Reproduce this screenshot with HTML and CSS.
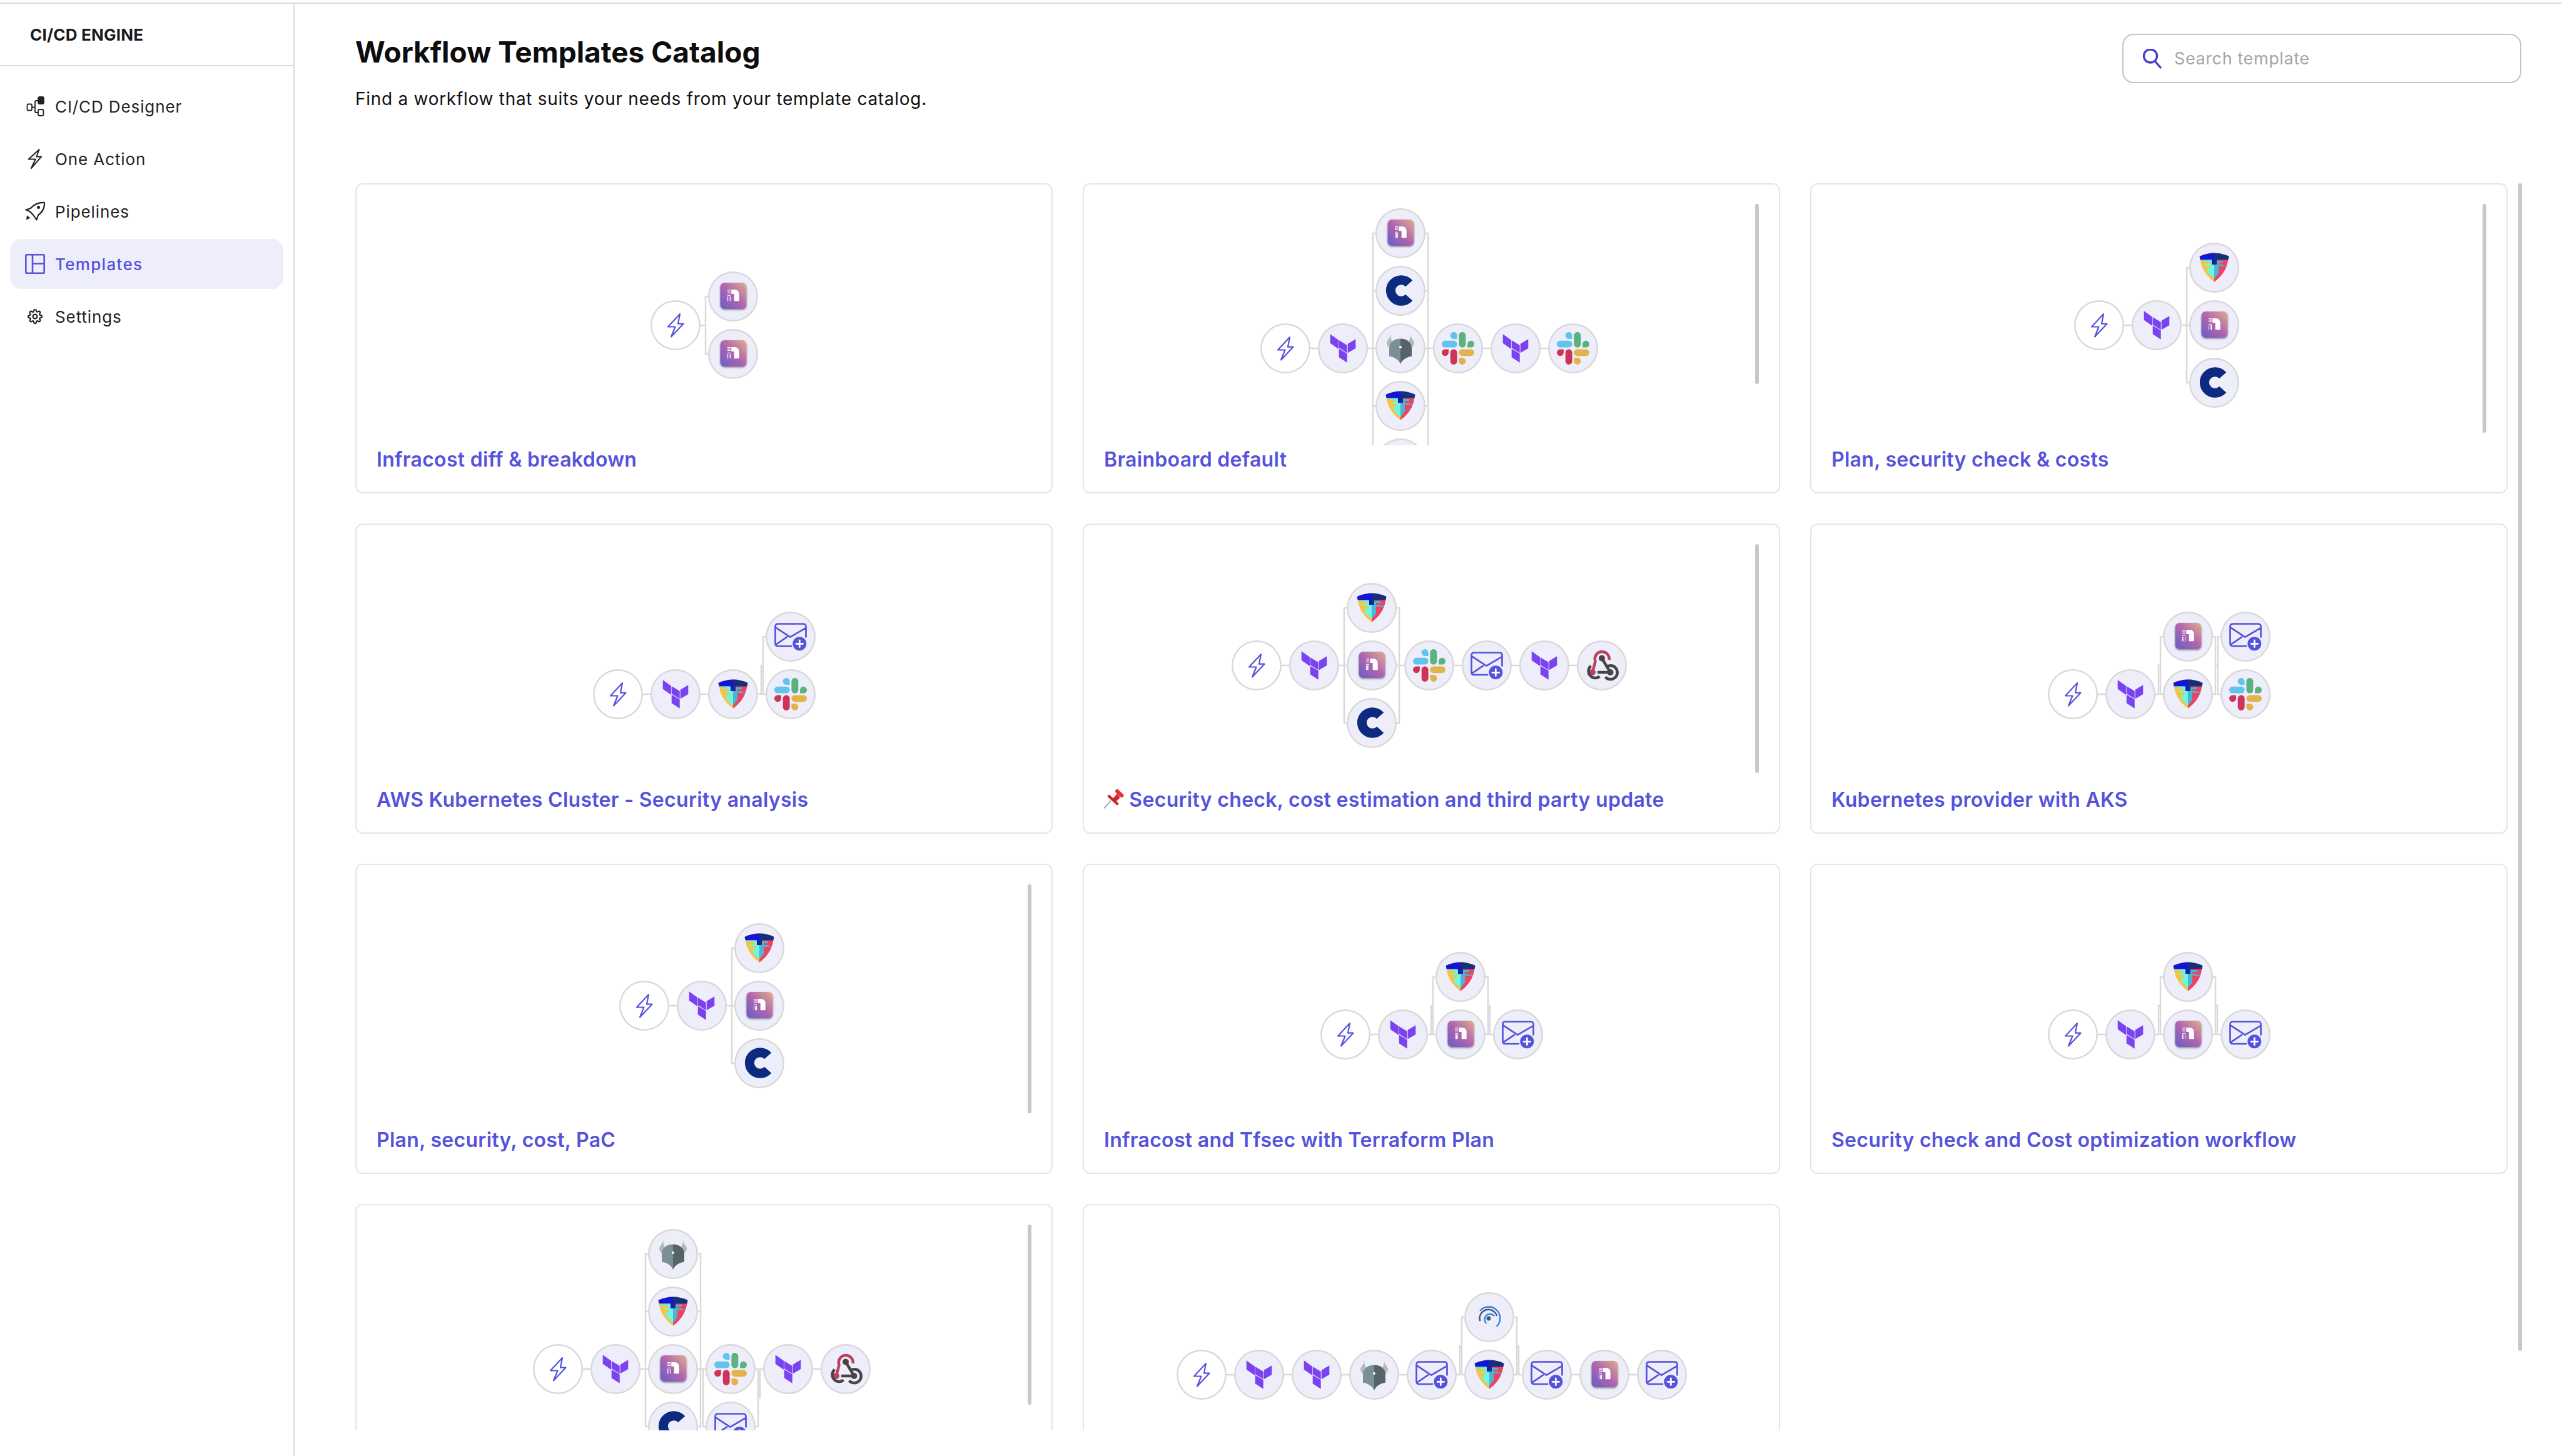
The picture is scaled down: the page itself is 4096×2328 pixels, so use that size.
FILE: index.html
```html
<!DOCTYPE html>
<html lang="en">
<head>
<meta charset="utf-8">
<title>Workflow Templates Catalog</title>
<link rel="stylesheet" href="styles.css">
</head>
<body>
<svg class="sprite" width="0" height="0" aria-hidden="true">
  <defs>
    <linearGradient id="netgrad" x1="0" y1="1" x2="1" y2="0">
      <stop offset="0" stop-color="#655fc4"/>
      <stop offset=".5" stop-color="#b064b0"/>
      <stop offset="1" stop-color="#e0ae8c"/>
    </linearGradient>
    <filter id="netshadow" x="-20%" y="-20%" width="140%" height="150%">
      <feDropShadow dx="0" dy="1.5" stdDeviation="1.6" flood-color="#000" flood-opacity=".45"/>
    </filter>
    <clipPath id="shieldclip"><path d="M16.5 22Q28 16.5 40 16.5T63.5 22L60.5 36Q55 52 40 62.7 25 52 19.5 36Z"/></clipPath>
  </defs>
  <symbol id="bolt" viewBox="0 0 80 80"><path d="M47 22 28 42.5H39.5L33 58.5 52.5 37.7H44Z" fill="none" stroke="#5552dc" stroke-width="2.2" stroke-linejoin="round"/></symbol>
  <symbol id="tf" viewBox="0 0 80 80"><path fill="#7b42ef" d="M19.7 17.3 33 26.7V41L19.7 31.7ZM33.7 27 46.7 35V47.3L33.7 39.3ZM47.7 32.7 60.3 25.3V40L47.7 47.3ZM33.7 40.7 46.7 48.3V62.7L33.7 54.3Z"/></symbol>
  <symbol id="net" viewBox="0 0 80 80">
    <rect x="19.5" y="18" width="42" height="42" rx="7" fill="url(#netgrad)" filter="url(#netshadow)"/>
    <path fill="#fff" d="M37.3 29H43Q49.7 29.5 49.7 37V47.3H41.7V36H37.3Z"/>
    <path fill="#fff" d="M31 29H36V30.2H31ZM31 31.4H36V32.6H31ZM31 33.8H36V35H31ZM31 37.8H36V38.8H31ZM31 40H32V47.3H31ZM33 40H34V47.3H33ZM35 40H36V47.3H35Z"/>
  </symbol>
  <symbol id="cost" viewBox="0 0 80 80"><path d="M53.7 28.3A16.8 16.8 0 1 0 53.7 50.7" fill="none" stroke="#0b2a80" stroke-width="15"/></symbol>
  <symbol id="slack" viewBox="0 0 80 80">
    <g transform="translate(14 14) scale(.4235)">
      <path fill="#cf3458" d="M25.8 77.6c0 7.1-5.8 12.9-12.9 12.9S0 84.7 0 77.6s5.8-12.9 12.9-12.9h12.9v12.9zM32.3 77.6c0-7.1 5.8-12.9 12.9-12.9s12.9 5.8 12.9 12.9v32.3c0 7.1-5.8 12.9-12.9 12.9s-12.9-5.8-12.9-12.9V77.6z"/>
      <path fill="#62c3ec" d="M45.2 25.8c-7.1 0-12.9-5.8-12.9-12.9S38.1 0 45.2 0s12.9 5.8 12.9 12.9v12.9H45.2zM45.2 32.3c7.1 0 12.9 5.8 12.9 12.9s-5.8 12.9-12.9 12.9H12.9C5.8 58.1 0 52.3 0 45.2s5.8-12.9 12.9-12.9h32.3z"/>
      <path fill="#5ab27f" d="M97 45.2c0-7.1 5.8-12.9 12.9-12.9s12.9 5.8 12.9 12.9-5.8 12.9-12.9 12.9H97V45.2zM90.5 45.2c0 7.1-5.8 12.9-12.9 12.9s-12.9-5.8-12.9-12.9V12.9C64.7 5.8 70.5 0 77.6 0s12.9 5.8 12.9 12.9v32.3z"/>
      <path fill="#e2b24b" d="M77.6 97c7.1 0 12.9 5.8 12.9 12.9s-5.8 12.9-12.9 12.9-12.9-5.8-12.9-12.9V97h12.9zM77.6 90.5c-7.1 0-12.9-5.8-12.9-12.9s5.8-12.9 12.9-12.9h32.3c7.1 0 12.9 5.8 12.9 12.9s-5.8 12.9-12.9 12.9H77.6z"/>
    </g>
  </symbol>
  <symbol id="shield" viewBox="0 0 80 80">
    <g clip-path="url(#shieldclip)">
      <rect x="10" y="10" width="30" height="60" fill="#f6c445"/>
      <rect x="40" y="10" width="30" height="60" fill="#ee4263"/>
      <path fill="#70f5e0" d="M26 29H40V58L29 47V41H34V37H26Z"/>
      <path fill="#4ab5d5" d="M54 29H40V58L47 49V37H54Z"/>
      <path fill="#f6c445" d="M22 31H33V34H22Z"/>
      <path fill="#ee4263" d="M47 32H60V35H47ZM47 40H58V43H47Z"/>
      <path fill="#4ab5d5" d="M48 36.5H60V38H48Z"/>
      <path fill="#1414d4" d="M10 10H40V35H36V27.5H10Z"/>
      <path fill="#15307a" d="M70 10H40V35H44V27.5H70Z"/>
      <path fill="#5fe3d3" d="M16 27.5H36V29H16Z"/>
    </g>
  </symbol>
  <symbol id="opa" viewBox="0 0 80 80">
    <path fill="#b5b8b8" d="M25 15Q24 22 19 28 16 33 22 39 24 33 26.5 28.5 23 22 25 15ZM55 15Q56 22 61 28 64 33 58 39 56 33 53.5 28.5 57 22 55 15Z"/>
    <path fill="#7b8f97" d="M40 24.5C30 24.5 22 30 22 40V52.5C30 54 37 58 40 65Z"/>
    <path fill="#566469" d="M40 24.5C50 24.5 58 30 58 40V52.5C50 54 43 58 40 65Z"/>
    <circle cx="40" cy="38" r="2" fill="#fff"/>
  </symbol>
  <symbol id="mail" viewBox="0 0 80 80">
    <path fill="none" stroke="#5552dc" stroke-width="2.7" stroke-linecap="round" stroke-linejoin="round" d="M41 55H20Q15.5 55 15.5 50.5V24Q15.5 19.5 20 19.5H60Q64.5 19.5 64.5 24V40.5M16.5 25.7 39.3 40.7 63.3 26.7M16.7 52.3 34 40.7"/>
    <circle cx="54.3" cy="51.3" r="11" fill="#5552dc"/>
    <path stroke="#fff" stroke-width="2.8" stroke-linecap="round" d="M54.3 46V56.6M49 51.3H59.6"/>
  </symbol>
  <symbol id="hook" viewBox="0 0 80 80">
    <path fill="none" stroke="#c03f60" stroke-width="4.5" d="M51.7 31A11.5 11.5 0 1 0 29.5 33.5L25 51"/>
    <circle cx="25" cy="51" r="5" fill="#c03f60"/>
    <path fill="none" stroke="#454545" stroke-width="4.5" d="M40 28.5 53.5 51H33M22.5 40.8A10.5 10.5 0 1 0 36.5 57.5M48.5 41.5A11 11 0 1 1 45.5 58.5"/>
    <circle cx="40" cy="28.5" r="5" fill="#454545"/>
    <circle cx="53.5" cy="51" r="5" fill="#454545"/>
  </symbol>
  <symbol id="signal" viewBox="0 0 80 80">
    <path fill="none" stroke="#2d80e0" stroke-width="2.4" stroke-linecap="round" d="M25.7 29.3A17.5 17.5 0 0 1 52.3 54.3M34.7 49.3A8.5 8.5 0 1 1 47.3 37.7"/>
    <path fill="none" stroke="#46566a" stroke-width="2.4" stroke-linecap="round" d="M25 45.3A14 14 0 0 1 51.7 37"/>
    <circle cx="39" cy="42" r="3.5" fill="#46566a"/>
  </symbol>
</svg>

<div class="app">
  <aside class="sidebar">
    <div class="brand">CI/CD ENGINE</div>
    <nav class="nav">
      <a class="nav-item">
        <svg class="nav-icon" viewBox="0 0 32 32" fill="none" stroke="#222" stroke-width="1.8"><rect x="3.5" y="12.5" width="7.5" height="10" rx="1.5"/><rect x="21" y="1" width="9" height="11" rx="2.5" fill="#222"/><rect x="21" y="21" width="8.5" height="10" rx="2.5"/><path d="M11 17.5H16M21 7H18Q16 7 16 9V24Q16 26 18 26H21"/></svg>
        <span>CI/CD Designer</span>
      </a>
      <a class="nav-item">
        <svg class="nav-icon" viewBox="0 0 32 32" fill="none" stroke="#222" stroke-width="2" stroke-linejoin="round"><path d="M22.7 1 5.7 16.5H16.7L10 31 26 12.5H18.3Z"/></svg>
        <span>One Action</span>
      </a>
      <a class="nav-item">
        <svg class="nav-icon" viewBox="0 0 32 32" fill="none" stroke="#222" stroke-width="2.2" stroke-linejoin="round"><path d="M31 2c.5 8-3 15-10 20l-2.5 7.5-5.5-8-5.5-5.5-6-2.5 7.5-2.5C14 5.5 22 1.5 31 2Z"/><circle cx="21.5" cy="9.5" r="2.5" fill="#222" stroke="none"/><path d="M2 29.5 3 22.5 8.5 26.5Z" fill="#222" stroke="none"/></svg>
        <span>Pipelines</span>
      </a>
      <a class="nav-item active">
        <svg class="nav-icon" viewBox="0 0 32 32" fill="none" stroke="#5552dc" stroke-width="2.6"><rect x="1.3" y="1.3" width="29.4" height="29.4" rx="1.5"/><path d="M12 1.3V30.7M12 15.5H30.7"/></svg>
        <span>Templates</span>
      </a>
      <a class="nav-item">
        <svg class="nav-icon" viewBox="-4 -4 32 32" fill="none" stroke="#222" stroke-width="2.2"><circle cx="12" cy="12" r="3.4"/><path d="M19.4 15a1.65 1.65 0 0 0 .33 1.82l.06.06a2 2 0 0 1 0 2.83 2 2 0 0 1-2.83 0l-.06-.06a1.65 1.65 0 0 0-1.82-.33 1.65 1.65 0 0 0-1 1.51V21a2 2 0 0 1-2 2 2 2 0 0 1-2-2v-.09A1.65 1.65 0 0 0 9 19.4a1.65 1.65 0 0 0-1.82.33l-.06.06a2 2 0 0 1-2.83 0 2 2 0 0 1 0-2.83l.06-.06a1.65 1.65 0 0 0 .33-1.82 1.65 1.65 0 0 0-1.51-1H3a2 2 0 0 1-2-2 2 2 0 0 1 2-2h.09A1.65 1.65 0 0 0 4.6 9a1.65 1.65 0 0 0-.33-1.82l-.06-.06a2 2 0 0 1 0-2.83 2 2 0 0 1 2.83 0l.06.06a1.65 1.65 0 0 0 1.82.33H9a1.65 1.65 0 0 0 1-1.51V3a2 2 0 0 1 2-2 2 2 0 0 1 2 2v.09a1.65 1.65 0 0 0 1 1.51 1.65 1.65 0 0 0 1.82-.33l.06-.06a2 2 0 0 1 2.83 0 2 2 0 0 1 0 2.83l-.06.06a1.65 1.65 0 0 0-.33 1.82V9a1.65 1.65 0 0 0 1.51 1H21a2 2 0 0 1 2 2 2 2 0 0 1-2 2h-.09a1.65 1.65 0 0 0-1.51 1Z"/></svg>
        <span>Settings</span>
      </a>
    </nav>
  </aside>

  <main class="main">
    <span class="page-thumb"></span>
    <header class="head">
      <div>
        <h1 class="heading">Workflow Templates Catalog</h1>
        <p class="subheading">Find a workflow that suits your needs from your template catalog.</p>
      </div>
      <label class="search">
        <svg class="search-icon" viewBox="0 0 32 32" fill="none" stroke="#4a3fd0" stroke-width="3.4"><circle cx="13" cy="11.5" r="10.5"/><path d="M20 19.5 30 31"/></svg>
        <input class="search-input" type="text" placeholder="Search template">
      </label>
    </header>

    <div class="catalog">
      <section class="grid">

        <article class="card">
          <div class="canvas two">
            <div class="diagram">
              <svg class="wires"><path d="M80 86H88M96 40H88V132H96"/></svg>
              <div class="node start c1 r1 span2"><svg><use href="#bolt"/></svg></div>
              <div class="node c2 r1"><svg><use href="#net"/></svg></div>
              <div class="node c2 r2"><svg><use href="#net"/></svg></div>
            </div>
          </div>
          <h2 class="title">Infracost diff &amp; breakdown</h2>
        </article>

        <article class="card">
          <div class="canvas scroll tall">
            <span class="thumb short"></span>
            <div class="diagram">
              <svg class="wires"><path d="M80 224H92M172 224H184M184 40H180V408H184M184 132H180M184 316H180M184 408H180M264 40H268V408H264M264 132H268M264 316H268M264 224H276M356 224H368M448 224H460"/></svg>
              <div class="node start c1 r3"><svg><use href="#bolt"/></svg></div>
              <div class="node c2 r3"><svg><use href="#tf"/></svg></div>
              <div class="node c3 r1"><svg><use href="#net"/></svg></div>
              <div class="node c3 r2"><svg><use href="#cost"/></svg></div>
              <div class="node c3 r3"><svg><use href="#opa"/></svg></div>
              <div class="node c3 r4"><svg><use href="#shield"/></svg></div>
              <div class="node c3 r5"><svg><use href="#mail"/></svg></div>
              <div class="node c4 r3"><svg><use href="#slack"/></svg></div>
              <div class="node c5 r3"><svg><use href="#tf"/></svg></div>
              <div class="node c6 r3"><svg><use href="#slack"/></svg></div>
            </div>
          </div>
          <h2 class="title">Brainboard default</h2>
        </article>

        <article class="card">
          <div class="canvas scroll three">
            <span class="thumb"></span>
            <div class="diagram">
              <svg class="wires"><path d="M80 132H92M172 132H184M184 40H180V224H184"/></svg>
              <div class="node start c1 r2"><svg><use href="#bolt"/></svg></div>
              <div class="node c2 r2"><svg><use href="#tf"/></svg></div>
              <div class="node c3 r1"><svg><use href="#shield"/></svg></div>
              <div class="node c3 r2"><svg><use href="#net"/></svg></div>
              <div class="node c3 r3"><svg><use href="#cost"/></svg></div>
            </div>
          </div>
          <h2 class="title">Plan, security check &amp; costs</h2>
        </article>

        <article class="card">
          <div class="canvas two">
            <div class="diagram">
              <svg class="wires"><path d="M80 132H92M172 132H184M264 132H269V86H272M276 40H272V132H276"/></svg>
              <div class="node start c1 r2"><svg><use href="#bolt"/></svg></div>
              <div class="node c2 r2"><svg><use href="#tf"/></svg></div>
              <div class="node c3 r2"><svg><use href="#shield"/></svg></div>
              <div class="node c4 r1"><svg><use href="#mail"/></svg></div>
              <div class="node c4 r2"><svg><use href="#slack"/></svg></div>
            </div>
          </div>
          <h2 class="title">AWS Kubernetes Cluster - Security analysis</h2>
        </article>

        <article class="card">
          <div class="canvas scroll three">
            <span class="thumb"></span>
            <div class="diagram">
              <svg class="wires"><path d="M80 132H92M172 132H184M184 40H180V224H184M264 40H268V224H264M264 132H276M356 132H368M448 132H460M540 132H552"/></svg>
              <div class="node start c1 r2"><svg><use href="#bolt"/></svg></div>
              <div class="node c2 r2"><svg><use href="#tf"/></svg></div>
              <div class="node c3 r1"><svg><use href="#shield"/></svg></div>
              <div class="node c3 r2"><svg><use href="#net"/></svg></div>
              <div class="node c3 r3"><svg><use href="#cost"/></svg></div>
              <div class="node c4 r2"><svg><use href="#slack"/></svg></div>
              <div class="node c5 r2"><svg><use href="#mail"/></svg></div>
              <div class="node c6 r2"><svg><use href="#tf"/></svg></div>
              <div class="node c7 r2"><svg><use href="#hook"/></svg></div>
            </div>
          </div>
          <h2 class="title"><svg class="pin" viewBox="0 0 32 32"><path d="M0 30.5 11 18" stroke="#7f97a8" stroke-width="1.4" fill="none"/><path d="M14 15 21 7 26 13 18 21Z" fill="#d4262c"/><path d="M8 11 21 23" stroke="#c9252b" stroke-width="4.4" stroke-linecap="round" fill="none"/><path d="M21 3 28.5 10" stroke="#e2332f" stroke-width="6" stroke-linecap="round" fill="none"/></svg> Security check, cost estimation and third party update</h2>
        </article>

        <article class="card">
          <div class="canvas two">
            <div class="diagram">
              <svg class="wires"><path d="M80 132H92M172 132H177V86H180M184 40H180V132H184M264 40H268V132H264M268 86H272M276 40H272V132H276"/></svg>
              <div class="node start c1 r2"><svg><use href="#bolt"/></svg></div>
              <div class="node c2 r2"><svg><use href="#tf"/></svg></div>
              <div class="node c3 r1"><svg><use href="#net"/></svg></div>
              <div class="node c3 r2"><svg><use href="#shield"/></svg></div>
              <div class="node c4 r1"><svg><use href="#mail"/></svg></div>
              <div class="node c4 r2"><svg><use href="#slack"/></svg></div>
            </div>
          </div>
          <h2 class="title">Kubernetes provider with AKS</h2>
        </article>

        <article class="card">
          <div class="canvas scroll three">
            <span class="thumb"></span>
            <div class="diagram">
              <svg class="wires"><path d="M80 132H92M172 132H184M184 40H180V224H184"/></svg>
              <div class="node start c1 r2"><svg><use href="#bolt"/></svg></div>
              <div class="node c2 r2"><svg><use href="#tf"/></svg></div>
              <div class="node c3 r1"><svg><use href="#shield"/></svg></div>
              <div class="node c3 r2"><svg><use href="#net"/></svg></div>
              <div class="node c3 r3"><svg><use href="#cost"/></svg></div>
            </div>
          </div>
          <h2 class="title">Plan, security, cost, PaC</h2>
        </article>

        <article class="card">
          <div class="canvas two">
            <div class="diagram">
              <svg class="wires"><path d="M80 132H92M172 132H177V86H180M184 40H180V132H184M264 40H268V132H264M268 86H271V132H276"/></svg>
              <div class="node start c1 r2"><svg><use href="#bolt"/></svg></div>
              <div class="node c2 r2"><svg><use href="#tf"/></svg></div>
              <div class="node c3 r1"><svg><use href="#shield"/></svg></div>
              <div class="node c3 r2"><svg><use href="#net"/></svg></div>
              <div class="node c4 r2"><svg><use href="#mail"/></svg></div>
            </div>
          </div>
          <h2 class="title">Infracost and Tfsec with Terraform Plan</h2>
        </article>

        <article class="card">
          <div class="canvas two">
            <div class="diagram">
              <svg class="wires"><path d="M80 132H92M172 132H177V86H180M184 40H180V132H184M264 40H268V132H264M268 86H271V132H276"/></svg>
              <div class="node start c1 r2"><svg><use href="#bolt"/></svg></div>
              <div class="node c2 r2"><svg><use href="#tf"/></svg></div>
              <div class="node c3 r1"><svg><use href="#shield"/></svg></div>
              <div class="node c3 r2"><svg><use href="#net"/></svg></div>
              <div class="node c4 r2"><svg><use href="#mail"/></svg></div>
            </div>
          </div>
          <h2 class="title">Security check and Cost optimization workflow</h2>
        </article>

        <article class="card">
          <div class="canvas scroll tall">
            <span class="thumb short"></span>
            <div class="diagram">
              <svg class="wires"><path d="M80 224H92M172 224H184M184 40H180V316H184M184 132H180M184 224H180M264 40H268V316H264M264 132H268M264 224H276M272 224V316H276M356 224H360V316H356M360 270H363V224H368M448 224H460"/></svg>
              <div class="node start c1 r3"><svg><use href="#bolt"/></svg></div>
              <div class="node c2 r3"><svg><use href="#tf"/></svg></div>
              <div class="node c3 r1"><svg><use href="#opa"/></svg></div>
              <div class="node c3 r2"><svg><use href="#shield"/></svg></div>
              <div class="node c3 r3"><svg><use href="#net"/></svg></div>
              <div class="node c3 r4"><svg><use href="#cost"/></svg></div>
              <div class="node c4 r3"><svg><use href="#slack"/></svg></div>
              <div class="node c4 r4"><svg><use href="#mail"/></svg></div>
              <div class="node c5 r3"><svg><use href="#tf"/></svg></div>
              <div class="node c6 r3"><svg><use href="#hook"/></svg></div>
            </div>
          </div>
        </article>

        <article class="card">
          <div class="canvas two">
            <div class="diagram">
              <svg class="wires"><path d="M80 132H92M172 132H184M264 132H276M356 132H368M448 132H453V86H456M460 40H456V132H460M540 40H544V132H540M544 86H547V132H552M632 132H644M724 132H736"/></svg>
              <div class="node start c1 r2"><svg><use href="#bolt"/></svg></div>
              <div class="node c2 r2"><svg><use href="#tf"/></svg></div>
              <div class="node c3 r2"><svg><use href="#tf"/></svg></div>
              <div class="node c4 r2"><svg><use href="#opa"/></svg></div>
              <div class="node c5 r2"><svg><use href="#mail"/></svg></div>
              <div class="node c6 r1"><svg><use href="#signal"/></svg></div>
              <div class="node c6 r2"><svg><use href="#shield"/></svg></div>
              <div class="node c7 r2"><svg><use href="#mail"/></svg></div>
              <div class="node c8 r2"><svg><use href="#net"/></svg></div>
              <div class="node c9 r2"><svg><use href="#mail"/></svg></div>
            </div>
          </div>
        </article>

      </section>
    </div>
  </main>
</div>
</body>
</html>
```
FILE: styles.css
```css
* { box-sizing: border-box; }
html, body { margin: 0; padding: 0; height: 100%; background: #fff; }
body { font-family: Inter, "Noto Sans", sans-serif; color: #1c1c1c; overflow: hidden; }

.sprite { position: absolute; width: 0; height: 0; overflow: hidden; }

.app {
  display: flex;
  height: 2324px;
  margin-top: 4px;
  border-top: 2px solid #dcdcdc;
}

/* Sidebar */
.sidebar { flex: 0 0 471px; border-right: 2px solid #dcdcdc; }
.brand {
  height: 100px;
  padding-left: 48px;
  display: flex;
  align-items: center;
  border-bottom: 2px solid #dcdcdc;
  font-size: 26px;
  font-weight: 700;
  letter-spacing: .2px;
  color: #1a1a1a;
}
.nav {
  display: flex;
  flex-direction: column;
  gap: 4px;
  padding: 24px 16px 0;
}
.nav-item {
  display: flex;
  align-items: center;
  gap: 16px;
  height: 80px;
  padding-left: 24px;
  border-radius: 18px;
  font-size: 26px;
  letter-spacing: .9px;
  color: #222;
}
.nav-item.active { background: #eeeefa; color: #5552dc; font-weight: 500; letter-spacing: 1.3px; }
.nav-icon { width: 32px; height: 32px; flex: none; }

/* Main */
.main {
  position: relative;
  flex: 1;
  display: flex;
  flex-direction: column;
  min-width: 0;
  padding: 0 87px 41px 97px;
}
.page-thumb {
  position: absolute;
  right: 64px;
  top: 287px;
  width: 6px;
  height: 1867px;
  border-radius: 3px;
  background: #c8c8c8;
}
.head {
  flex: 0 0 287px;
  display: flex;
  justify-content: space-between;
  align-items: flex-start;
  padding-top: 47px;
}
.heading {
  margin: 0;
  font-size: 46px;
  line-height: 60px;
  font-weight: 700;
  color: #0d0d0d;
}
.subheading {
  margin: 25px 0 0;
  font-size: 28px;
  line-height: 40px;
  letter-spacing: .72px;
  color: #111;
}
.search {
  display: flex;
  align-items: center;
  gap: 19px;
  width: 638px;
  height: 79px;
  margin: 1px -22px 0 0;
  padding-left: 30px;
  border: 2.5px solid #c4c4c4;
  border-radius: 18px;
}
.search-icon { width: 32px; height: 32px; flex: none; }
.search-input {
  flex: 1;
  min-width: 0;
  border: 0;
  outline: 0;
  padding: 0;
  background: transparent;
  font-family: Inter, sans-serif;
  font-size: 27px;
  letter-spacing: .6px;
}
.search-input::placeholder { color: #a6a6a6; opacity: 1; }

/* Catalog */
.catalog { flex: 1; min-height: 0; overflow: hidden; }
.grid {
  display: grid;
  grid-template-columns: repeat(3, 1fr);
  grid-auto-rows: 496px;
  gap: 48px;
}
.card {
  border: 2px solid #e6e6e6;
  border-radius: 12px;
  min-width: 0;
}
.canvas {
  position: relative;
  height: 417px;
  overflow: hidden;
  display: flex;
  justify-content: center;
  align-items: flex-start;
}
.canvas.scroll { padding-right: 7px; }
.canvas.two { padding-top: 139px; }
.canvas.three { padding-top: 93px; }
.canvas.tall { padding-top: 38px; }
.thumb {
  position: absolute;
  top: 31px;
  right: 32px;
  width: 6px;
  height: 366px;
  border-radius: 3px;
  background: #c8c8c8;
}
.thumb.short { height: 288px; }
.title {
  margin: 3px 0 0;
  padding: 0 32px;
  font-size: 32px;
  line-height: 40px;
  font-weight: 600;
  letter-spacing: .3px;
  color: #5552dc;
  white-space: nowrap;
}
.pin { width: 32px; height: 32px; vertical-align: -4px; }

/* Diagram */
.diagram {
  position: relative;
  display: grid;
  grid-auto-columns: 80px;
  grid-auto-rows: 80px;
  gap: 12px;
}
.wires {
  position: absolute;
  inset: 0;
  width: 100%;
  height: 100%;
  overflow: visible;
}
.wires path { fill: none; stroke: #d9d9d9; stroke-width: 2.5; }
.node {
  position: relative;
  width: 80px;
  height: 80px;
  border-radius: 50%;
  background: #eeeefa;
  box-shadow: inset 0 0 0 2.5px #d9d9d9;
}
.node svg { display: block; width: 80px; height: 80px; }
.node.start { background: #fff; }
.span2 { grid-row-end: span 2; align-self: center; }

.c1 { grid-column-start: 1; }
.c2 { grid-column-start: 2; }
.c3 { grid-column-start: 3; }
.c4 { grid-column-start: 4; }
.c5 { grid-column-start: 5; }
.c6 { grid-column-start: 6; }
.c7 { grid-column-start: 7; }
.c8 { grid-column-start: 8; }
.c9 { grid-column-start: 9; }
.r1 { grid-row-start: 1; }
.r2 { grid-row-start: 2; }
.r3 { grid-row-start: 3; }
.r4 { grid-row-start: 4; }
.r5 { grid-row-start: 5; }
```
